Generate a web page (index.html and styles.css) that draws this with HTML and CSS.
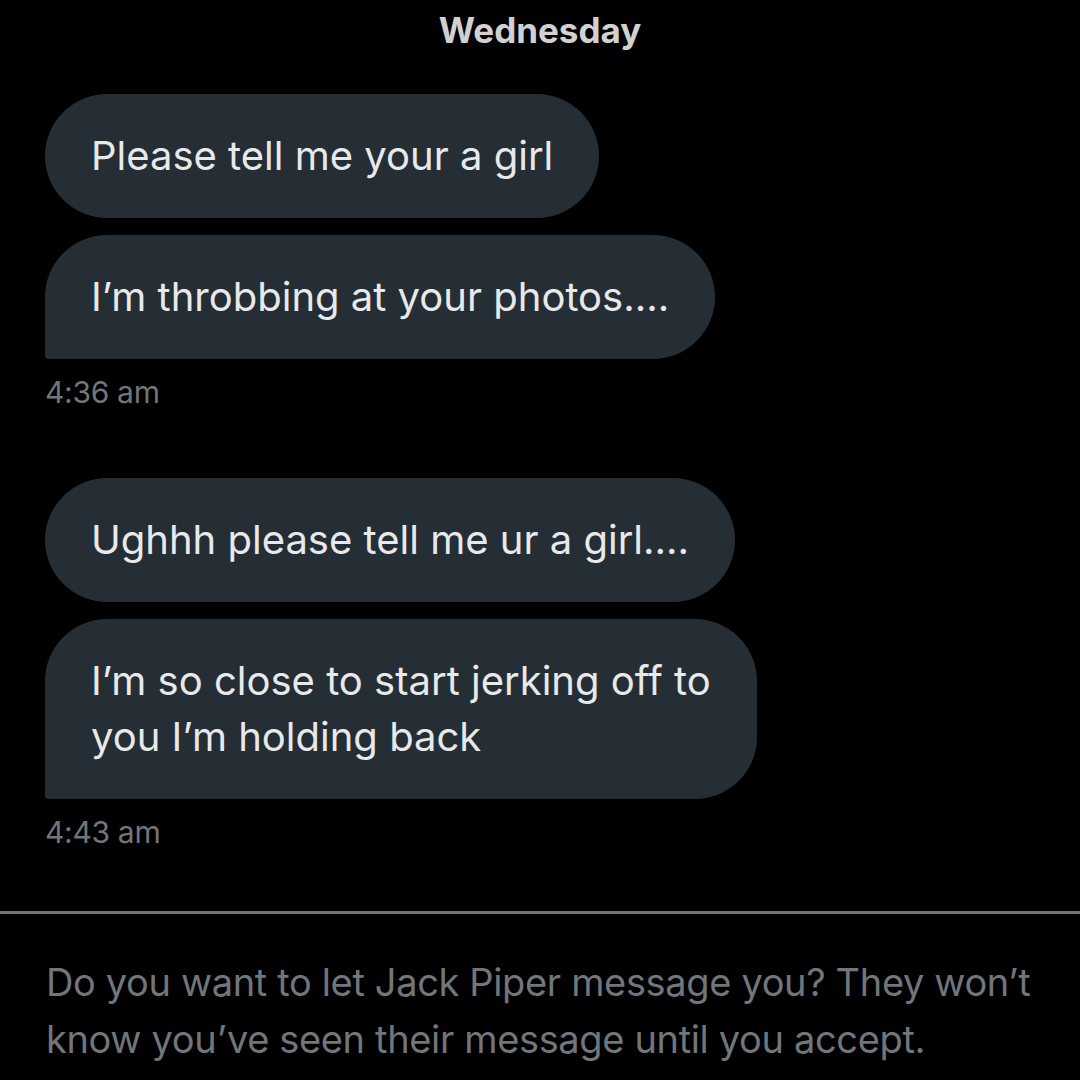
FILE: index.html
```html
<!DOCTYPE html>
<html lang="en">
<head>
    <meta charset="UTF-8">
    <meta name="viewport" content="width=device-width, initial-scale=1.0">
    <title>Message request</title>
    <link rel="stylesheet" href="styles.css">
</head>
<body>
    <div class="day">Wednesday</div>

    <div class="group">
        <div class="bubble">Please tell me your a girl</div>
        <div class="bubble last">I’m throbbing at your photos....</div>
        <div class="time">4:36 am</div>
    </div>

    <div class="group">
        <div class="bubble">Ughhh please tell me ur a girl....</div>
        <div class="bubble last">I’m so close to start jerking off to<br>you I’m holding back</div>
        <div class="time">4:43 am</div>
    </div>

    <div class="request">
        <p>Do you want to let Jack Piper message you? They won’t know you’ve seen their message until you accept.</p>
    </div>
</body>
</html>
```

FILE: styles.css
```css
body{
    margin: 0;
    background-color: #000;
    font-family: "Inter", "Noto Sans", sans-serif;
    color: #e7e9ea;
    overflow: hidden;
}
.day{
    text-align: center;
    font-size: 35px;
    font-weight: 700;
    color: #d1d1d1;
    padding-top: 10px;
    line-height: 40px;
}
.group{
    display: flex;
    flex-direction: column;
    align-items: flex-start;
    gap: 17px;
    padding: 0 45px;
    margin-top: 44px;
}
.group + .group{
    margin-top: 68px;
}
.bubble{
    background-color: #252d35;
    border-radius: 62px;
    padding: 34px 46px;
    font-size: 40px;
    line-height: 56px;
}
.bubble.last{
    border-bottom-left-radius: 4px;
}
.time{
    font-size: 30px;
    letter-spacing: -0.3px;
    color: #71767b;
    margin-top: -2px;
    line-height: 36px;
}
.request{
    border-top: 3px solid #6e767d;
    margin-top: 61px;
    padding: 40px 20px 0 46px;
}
.request p{
    margin: 0;
    font-size: 38px;
    letter-spacing: -0.35px;
    line-height: 57px;
    color: #71767b;
}
```
